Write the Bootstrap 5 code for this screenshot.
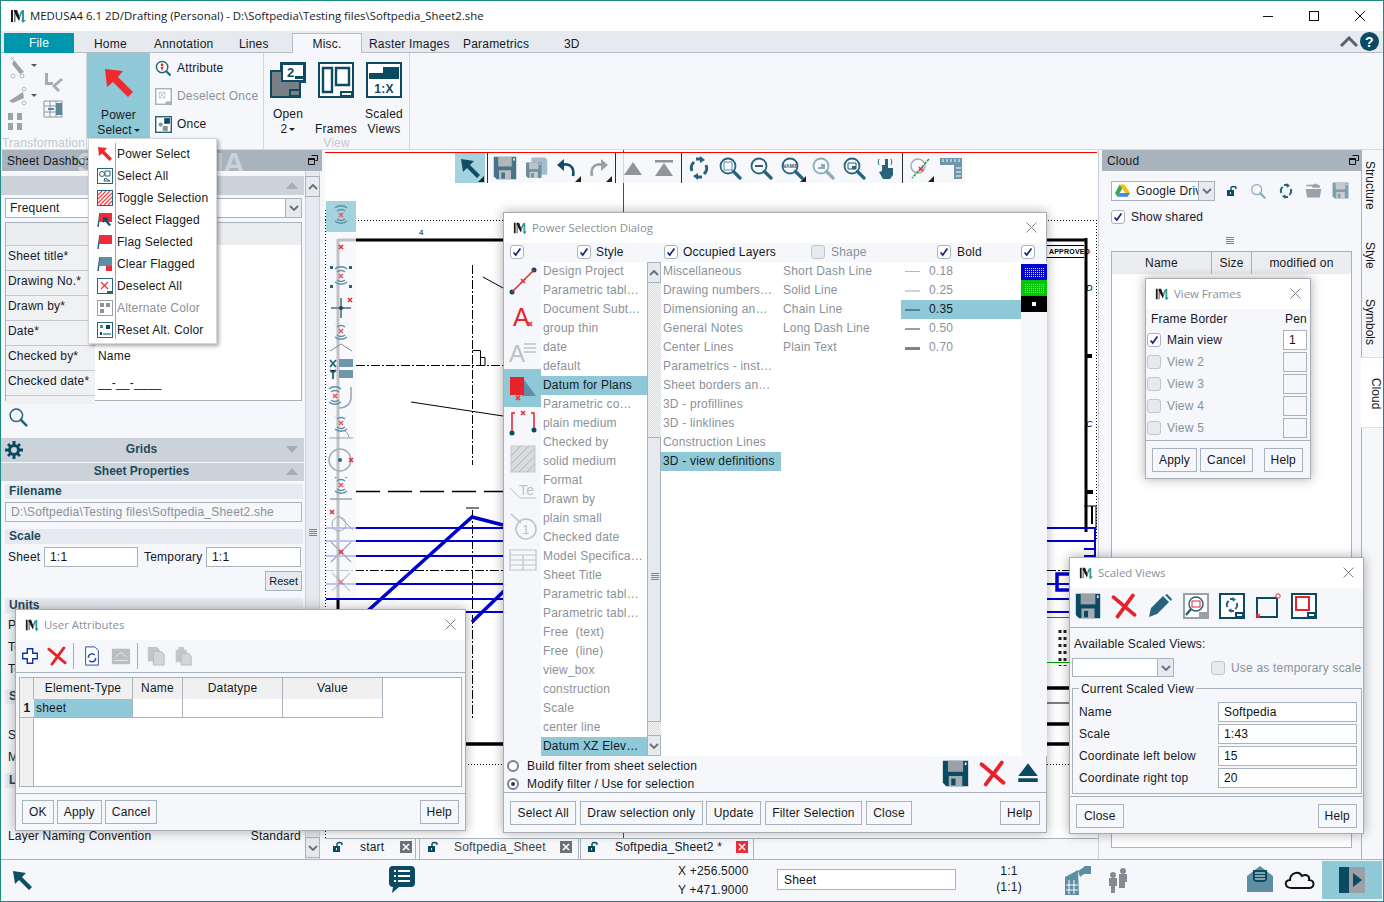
<!DOCTYPE html>
<html lang="en">
<head>
<meta charset="utf-8">
<title>MEDUSA4</title>
<link rel="stylesheet" href="https://cdn.jsdelivr.net/npm/bootstrap@5.3.0/dist/css/bootstrap.min.css">
<style>
:root{--pg:#f5f7fb;--bar:#a9b3be;--sec:#ccd2d9;--sub:#e6e9ee;--line:#a9b3be;--sel:#8fc9d8;--teal:#0b4a63;--grey:#8b9198}
html,body{margin:0;height:100%;background:var(--pg)}
body{font:12px/1.2 "Liberation Sans",Arial,sans-serif;color:#14191e;letter-spacing:.2px;overflow:hidden}
.defs{position:absolute}
.app{width:1384px;height:902px;position:relative;background:var(--pg);border:1px solid #1f8a80;overflow:hidden}
.ui{font-family:"Open Sans","Noto Sans",sans-serif;letter-spacing:0;font-size:11.4px}
.titlebar{height:30px;background:#fff;padding-left:9px;flex:none}
.titlebar .t{margin-left:4px;white-space:nowrap}
.winbtns{margin-left:auto}
.winbtns svg{display:block;width:46px;height:14px}
.rtabs{height:22px;background:var(--sub);border-bottom:1px solid #b6bdc5;flex:none;position:relative}
.rtabs span{position:absolute;top:6px;white-space:nowrap}
.rtabs .file{left:3px;top:2px;width:70px;height:20px;background:#0096ae;color:#fff;text-align:center;line-height:20px}
.rtabs .act{left:291px;top:2px;width:70px;height:21px;background:var(--pg);border:1px solid #b6bdc5;border-bottom:0;text-align:center;line-height:21px}
.t-home{left:93px}.t-ann{left:153px}.t-lin{left:238px}.t-ras{left:368px}.t-par{left:462px}.t-3d{left:563px}
.ic-up{position:absolute;left:1339px;top:5px}.ic-help{position:absolute;left:1359px;top:1px}
.ribbon{height:97px;flex:none;position:relative;background:var(--pg);border-bottom:1px solid #d7dbe0}
.rgrp{position:relative;height:96px;border-right:1px solid #d3d7dc}
.rgrp .cap{position:absolute;bottom:-1px;left:0;right:0;text-align:center;color:#c3c8ce;white-space:nowrap;line-height:14px}
.rgrp .cap.lft{text-align:left;left:1px;right:auto}
.tf{width:86px;flex:none;display:flex}
.tf>div{display:flex;flex-direction:column}
.tf .c1{width:38px;padding:3px 0 0 5px;gap:4px}
.tf .c2{padding:19px 0 0 4px;gap:7px}
.tf svg{display:block;opacity:.75}
.psel{width:63px;height:85px;background:var(--sel);text-align:center;line-height:15px;padding-top:14px;flex:none}
.psel svg{width:32px;height:32px;display:block;margin:0 auto 9px}
.caret{display:inline-block;border:3px solid transparent;border-top:3px solid #222;border-bottom:0;vertical-align:2px;margin-left:2px}
.small3{width:114px;flex:none;padding:1px 0 0 5px;display:flex;flex-direction:column}
.small3 div{height:28px;display:flex;align-items:center;gap:5px}
.small3 svg{width:17px;height:17px;flex:none}
.dis{color:var(--grey)}
.gviews{width:146px;flex:none}
.big{width:48px;text-align:center;line-height:15px;position:absolute;top:9px}
.big svg{width:36px;height:36px;display:block;margin:0 auto 9px}
.b1{left:0}.b2{left:48px}.b3{left:96px}
.main{height:709px;flex:none;position:relative}
.left{width:324px;flex:none}
.phead{height:21px;background:var(--bar);padding-left:5px;line-height:23px;position:relative;white-space:nowrap;overflow:hidden}
.phead.pl{width:320px;margin-left:1px}.phead.pr{width:259px}
.phead svg{position:absolute;right:4px;top:5px;width:10px;height:10px}
.phead.pr svg{right:2px}
.lbody{height:688px}
.lcol{width:303px;flex:none;position:relative}
.secbar{background:var(--sec);text-align:center;position:relative;font-weight:700;color:#1e4a5c;letter-spacing:0;padding-right:22px}
.secbar i{position:absolute;right:6px;top:50%;margin-top:-4px;border:6px solid transparent;border-top:0;border-bottom:7px solid #a5adb6}
.secbar i.dn{border-bottom:0;border-top:7px solid #a5adb6}
.sb1{height:19px;margin-top:5px;line-height:19px;color:#333}
.sb-grid{height:24px;line-height:23px;margin-top:11px}
.sb-prop{height:18px;line-height:17px;margin-top:1px}
.gear{position:absolute;left:4px;top:3px}
.sub{background:var(--sub);font-weight:700;color:#1e4a5c;padding-left:4px;height:15px;line-height:15px;letter-spacing:.1px;margin:7px 1px 0 4px}
.sub.s3{margin-top:3px}.sub.s9{margin-top:9px}.sub.s5{margin-top:5px}
.vsb{width:15px;flex:none;background:var(--sub);border:solid #cfd3d9;border-width:0 1px;position:relative;margin-left:1px}
.vsb .b{height:21px;background:var(--sub);border:1px solid #a9b3be;position:absolute;left:-1px;right:-1px;text-align:center}
.vsb .top{top:5px}.vsb .bot{bottom:1px}
.vsb .chev{margin-top:7px}
.chev{width:10px;height:6px;display:block;margin:0 auto}
.grip{width:8px;height:7px;background:repeating-linear-gradient(#7c858f 0 1px,transparent 1px 2px);position:absolute;left:3px}
.grip.g1{top:358px}
.qinp{height:20px;border:1px solid var(--line);border-radius:0;padding:0 5px;font-size:12px;background:#fff;min-height:0;color:#111;line-height:18px;box-shadow:none;letter-spacing:.2px}
.qinp.ro{color:var(--grey);background:var(--pg)}
.combo{height:20px;border:1px solid var(--line);background:#fff;display:flex;overflow:hidden}
.combo .v{flex:1;padding:0 4px;line-height:18px;white-space:nowrap;overflow:hidden}
.combo .a{width:16px;border-left:1px solid var(--line);background:var(--sub);display:flex;align-items:center;justify-content:center;flex:none}
.qbtn{height:24px;border:1px solid var(--line);border-radius:0;background:var(--pg);font-size:12px;padding:0 6px;color:#14191e;line-height:22px;--bs-btn-font-size:12px;white-space:nowrap;letter-spacing:.2px}
.qbtn.w7{padding:0 6.5px}
.qbtn.w8{padding:0 7px}
.c-freq{margin:3px 0 0 4px;width:297px}
.ftab{width:297px;margin-left:4px;height:179px;border:1px solid var(--line);background:#fff;margin-top:4px}
.ftab .hd{height:22px;background:#ecedf0}
.ftab .r{display:flex;height:25px}
.ftab .l{width:89px;background:#f0f1f3;border-top:1px solid #c4c9cf;padding-left:2px;line-height:20px;flex:none}
.ftab .r.cut{height:9px}
.ftab .rv{padding-left:3px;line-height:22px}
.ftab .rv.low{line-height:26px}
.search{display:block;margin:6px 0 0 7px}
.i-file{margin:3px 0 0 4px;width:297px}
.srow{margin:3px 0 0 7px}
.srow .l1{width:36px}.srow .l2{margin-left:6px;width:62px}
.w94{width:94px}.w95{width:95px}
.resetw{padding-right:2px;margin-top:4px}
.qbtn.rst{height:20px;line-height:18px;padding:0 3px;background:var(--sub);font-size:11px;letter-spacing:0}
.ur{margin:4px 0 0 7px;height:18px}.ur.f{margin-top:5px}.ur.g{margin-top:24px}
.lnc{margin:41px 3px 0 7px}
.canvas{width:773px;flex:none;position:relative;background:#fff;overflow:hidden}
.dw{position:absolute;left:0;top:0;width:772px;height:688px}
.ctool{position:absolute;left:130px;top:3px;height:30px;width:510px;display:flex;background:rgba(245,247,251,.82)}
.ctool .c{width:31px;display:flex;align-items:center;justify-content:center;position:relative;flex:none}
.ctool .c svg{width:24px;height:24px}
.ctool .c.on{background:rgba(143,201,216,.8);width:30px}
.ctool .c.m::after{content:"";position:absolute;right:1px;bottom:1px;border-left:6px solid transparent;border-bottom:6px solid #222}
.ctool .sep{width:1px;background:#2c3136;margin:0 1px 0 2px;flex:none}
.ctool .sep.s1{margin-left:2px}.ctool .sep.s4{margin-left:2px}
.o75{opacity:.75}.o6{opacity:.6}.o5{opacity:.5}
.ltool{position:absolute;left:1px;top:51px;width:30px;background:rgba(245,247,251,.78);display:flex;flex-direction:column}
.ltool div{height:30.5px;display:flex;align-items:center;justify-content:center}
.ltool .on{background:rgba(143,201,216,.8)}
.ltool svg{width:28px;height:28px}
.dtabs{position:absolute;left:-1px;right:0;top:688px;height:21px;background:var(--pg);border-top:1px solid var(--line);display:flex}
.dtab{height:21px;border:1px solid var(--line);border-top:0;margin-right:3px;position:relative;flex:none;line-height:16px}
.dtab svg{position:absolute;top:2px;width:12px;height:12px}
.dtab .lk{left:7px}.dtab .cl{right:6px}.dtab .cl3{right:5px}
.dtab span{position:absolute;left:35px;white-space:nowrap}
.dt1{width:92px}.dt1 .cl{right:3px}.dt2{width:160px}.dt2 span{left:34px}.dt2 span{color:#3a4249}
.dt3{width:174px;margin-left:-2px}.dt3 .lk{left:6px}.dt3 span{left:34px}
.right{width:263px;flex:none;border-left:1px solid #c9ced4;padding-left:3px}
.rrow{margin:10px 0 0 9px;height:19px}
.c-gd{width:104px;flex:none}
.c-gd .v{padding-left:3px;display:flex;align-items:center;gap:6px}
.gd{width:15px;height:14px;flex:none}
.rrow .lk{width:12px;height:12px;margin-left:11px}
.rrow .s{width:16px;height:16px;margin-left:12px}
.rrow .fo{width:17px;height:17px;margin-left:11px}
.rrow .sv{width:17px;height:17px;margin-left:10px}
.shared{margin:10px 0 0 9px;gap:6px}
.grip.g2{position:relative;left:0;margin:13px 0 0 124px;height:8px}
.rtable{width:241px;height:597px;border:1px solid var(--line);background:#fff;margin-left:9px;margin-top:6px}
.rtable .h{display:flex;height:22px;background:#ecedf0;text-align:center;line-height:22px}
.rtable .h div+div{border-left:1px solid var(--line)}
.rtable .n1{width:99px}.rtable .n2{width:40px}.rtable .n3{flex:1}
.vtabs{width:23px;flex:none;border-left:1px solid var(--line);position:relative}
.vt{position:absolute;left:1px;writing-mode:vertical-rl;white-space:nowrap;letter-spacing:0}
.v1{top:11px}.v2{top:92px}.v3{top:149px}
.vt.act{top:207px;left:-1px;width:23px;background:#fff;padding:20px 0 0 2px;height:71px;border:1px solid #dde1e6;border-left:0}
.status{height:43px;flex:none;border-top:1px solid var(--line);background:var(--pg);position:relative}
.status>*{position:absolute}
.st-ar{left:9px;top:8px;width:24px;height:24px}
.st-ch{left:387px;top:5px;width:28px;height:30px}
.st-x{left:677px;top:4px}.st-y{left:677px;top:23px}
.qinp.st-in{left:776px;top:9px;width:179px;height:21px;padding-left:6px}
.st-s1{left:998px;top:4px;width:20px;text-align:center}
.st-s2{left:990px;top:20px;width:36px;text-align:center}
.st-i1{left:1063px;top:5px;width:28px;height:30px}
.st-i2{left:1105px;top:7px;width:24px;height:26px}
.st-i3{left:1245px;top:5px;width:28px;height:28px}
.st-i4{left:1283px;top:8px;width:32px;height:22px}
.st-sel{left:1321px;top:1px;width:60px;height:38px;background:var(--sel);display:flex;align-items:center;justify-content:center}
.form-check-input{width:14px;height:14px;margin:0;border:1px solid #a9b3be;border-radius:0;background-color:#fff;opacity:1!important;flex:none}
.form-check-input:disabled{background-color:#e6e9ee;border-color:#c0c6cd}
.form-check-input:checked,.form-check-input:checked:disabled{background-color:#fff;border-color:#a9b3be;background-image:url("data:image/svg+xml,%3csvg xmlns='http://www.w3.org/2000/svg' viewBox='0 0 14 14'%3e%3cpath fill='none' stroke='%231a237e' stroke-width='2' d='M3 7.5l2.5 3L11 3'/%3e%3c/svg%3e");background-size:100%}
.dlg{position:absolute;background:var(--pg);border:1px solid #a7adb4;box-shadow:0 0 11px rgba(0,0,0,.32);display:flex;flex-direction:column;z-index:5}
.dtitle{height:30px;background:#fff;display:flex;align-items:center;padding-left:9px;color:#8a9097;flex:none;position:relative}
.dtitle .lg{width:14px;height:14px;margin-right:5px}
.dtitle .x{position:absolute;right:9px;top:9px;width:11px;height:11px}
.d-ua{left:14px;top:608px;width:451px;height:222px}
.d-ps{left:502px;top:211px;width:544px;height:621px}
.d-vf{left:1144px;top:277px;width:166px;height:201px}
.d-sv{left:1068px;top:556px;width:295px;height:277px}
.uatool{height:33px;border-bottom:1px solid var(--line);display:flex;align-items:center;padding-left:4px;flex:none}
.uatool svg{width:20px;height:20px;margin-right:7px}
.uatool svg.m9{margin-right:9px}
.uatool svg.m6{margin-right:6px}
.uatool .s{width:1px;height:26px;background:#aab;margin:0 8px 0 0}
.uag{margin:4px 3px 0 3px;height:110px;border:1px solid var(--line);background:#fff;display:grid;grid-template-columns:14px 99px 50px 100px 100px 1fr;grid-template-rows:21px 19px 1fr;flex:none}
.uag>div{border-right:1px solid var(--line);text-align:center;line-height:20px;background:#f0f0f1}
.uag .c{background:#fff;border-bottom:1px solid var(--line);text-align:left}
.uag .n{background:#f0f0f1;font-weight:700;border-bottom:1px solid var(--line);border-right:0;line-height:18px}
.uag .s{background:var(--sel);text-align:left;padding-left:2px;border-bottom:1px solid var(--line);line-height:18px}
.uag .e{background:#fff;border:0}
.ftr{display:flex;gap:3px;border-top:1px solid var(--line);flex:none}
.ftr.f-ua{margin-top:6px;padding:6px 6px 0}
.ftr.f-ps{padding:8px 6px 0;gap:3.5px}
.ftr.f-vf{margin-top:1px;padding:7px 7px 0 6px}
.ftr.f-sv{margin-top:2px;padding:7px 6px 0}
.colhd{height:19px;position:relative;flex:none}
.colhd>*{position:absolute;top:2px}
.ch1{left:6px}.ch2{left:73px}.ch3{left:92px}.ch4{left:160px}.ch5{left:179px}.ch6{left:307px}.ch7{left:327px}.ch8{left:433px}.ch9{left:453px}.ch10{left:517px}
.lists{height:494px;display:flex;flex:none}
.icol{width:37px;flex:none;position:relative;display:flex;flex-direction:column;align-items:center;background:var(--pg)}
.icol svg{flex:none}
.i1{margin-top:4px}.i2{margin-top:6px}.i3{margin-top:6px}.i5{margin-top:1px}.i6{margin-top:8px}.i7{margin-top:9px}.i8{margin-top:8px}.i9{margin-top:7px}
.isel{width:37px;height:38px;background:var(--sel);margin-top:3px;display:flex;align-items:center;justify-content:center;flex:none}
.lg-g{--bs-list-group-bg:transparent;--bs-list-group-border-width:0;border-radius:0;flex:none;background:#fff}
.lg-g .list-group-item{height:19px;padding:0 2px;line-height:19px;color:var(--grey);white-space:pre;overflow:hidden;background:transparent;border:0;border-radius:0}
.lg-g .list-group-item.active{background:var(--sel);color:#14191e}
.w106{width:106px}.w120{width:120px}
.lw{width:15px;height:1px;margin:0 9px 0 2px;background:#b5bac0}
.lw.a{background:#d0d3d6;box-shadow:0 1px #d0d3d6}
.lw.b{height:2px;background:#5a7e90}
.lw.c{height:2px;background:#9a9fa5}
.lw.d{height:2px;background:#7c8187;box-shadow:0 1px #7c8187}
.lsb{margin:0;width:14px;background:repeating-conic-gradient(#d9dce0 0 25%,#f4f5f7 0 50%) 0 0/2px 2px;border:0;border-left:1px solid #a9b3be}
.lsb .b{left:-1px;right:0}
.lsb .top{top:0}.lsb .bot{bottom:0}
.lsb .thumb{top:175px;height:285px}
.grip.g3{top:135px}
.colors{width:26px;flex:none;background:var(--pg);padding-top:2px}
.colors svg{display:block}
.radios{height:36px;flex:none;padding-left:3px}
.radios .fcol{flex:1}
.radios .rr{gap:8px;height:18px}
.radios .r1{margin-top:1px}
.rs1{margin:4px 10px 0 0}.rs2{margin:4px 10px 0 0}.rs3{margin:5px 6px 0 0}
.radio{width:12px;height:12px;border:2px solid #7b838c;border-radius:50%;display:inline-block;position:relative;background:#fff}
.radio.on::after{content:"";position:absolute;left:2px;top:2px;width:4px;height:4px;border-radius:50%;background:#2a3a6e}
.menu{position:absolute;left:87px;top:137px;width:129px;height:206px;background:#fff;border:1px solid #d4d7db;box-shadow:2px 2px 4px rgba(0,0,0,.35);z-index:6;padding-top:4px}
.menu::before{content:"";position:absolute;left:26px;top:4px;bottom:4px;width:1px;background:#9ea5ad}
.menu div{height:22px;display:flex;align-items:center;white-space:nowrap}
.menu svg{width:16px;height:16px;margin:0 4px 0 8px;flex:none}
.wm{position:absolute;left:76px;top:147px;font:700 30px/1 "Liberation Sans",sans-serif;color:rgba(255,255,255,.42);letter-spacing:-.5px;z-index:4;pointer-events:none}
.vf-h{padding:3px 3px 3px 5px}
.vf-r{height:22px;padding:0 3px 0 1px;gap:6px}
.w24{width:24px}
.sv-tb{height:40px;gap:10px;padding:0 0 4px 5px;border-bottom:1px solid var(--line);flex:none}
.sv-av{padding:9px 0 0 4px}
.sv-c{margin-top:7px;padding-left:2px}
.c-sv{width:102px;height:19px}
.sv-cb{margin-left:37px}
.sv-u{margin-left:6px;white-space:nowrap}
.sv-f{border:1px solid var(--line);margin:11px 1px 0 2px;height:106px;padding:12px 4px 0 6px}
.sv-f legend{font-size:12px;top:-7px;left:6px;width:auto;background:var(--pg);padding:0 2px;margin:0;letter-spacing:.2px}
.sv-r{height:22px}
.w139{width:139px}
</style>
</head>
<body>
<svg class="defs" width="0" height="0">
<defs>
<pattern id="dbl" width="2" height="2" patternUnits="userSpaceOnUse"><rect width="2" height="2" fill="#0000d0"/><rect width="1" height="1" fill="#ddd"/></pattern>
<pattern id="dgr" width="2" height="2" patternUnits="userSpaceOnUse"><rect width="2" height="2" fill="#06c506"/><rect width="1" height="1" fill="#bbb"/></pattern>
<symbol id="logo" viewBox="0 0 16 16"><path fill="#1b1b1b" d="M1 2h2v12H1zM4 2h3l3 8-1 3-5-9z"/><path fill="#777" d="M4 4v10h1.500V7z"/><path fill="#2f9a92" d="M11 3l2-1h1v10h2l-3 3-2-3h1V5l-2 5-1-2z"/></symbol>
<symbol id="x" viewBox="0 0 11 11"><path stroke="#7d848b" stroke-width="1" d="M.5.5l10 10M10.500.5l-10 10"/></symbol>
<symbol id="chev" viewBox="0 0 10 6"><path fill="none" stroke="#66707a" stroke-width="1.800" d="M1 1l4 4 4-4"/></symbol>
<symbol id="chevu" viewBox="0 0 10 6"><path fill="none" stroke="#66707a" stroke-width="1.800" d="M1 5l4-4 4 4"/></symbol>
<symbol id="rarrow" viewBox="0 0 32 32"><path fill="#f0292e" d="M2 2l18 2-5 6 15 15-5 5L10 15l-6 5z"/></symbol>
<symbol id="darrow" viewBox="0 0 24 24"><path fill="#0f4d66" d="M3 3l13 2-4 4 10 10-3 3L9 12l-4 4z"/></symbol>
<symbol id="save" viewBox="0 0 32 32"><path fill="#0b4a63" d="M1 1h30v30H5l-4-4z"/><path fill="#9aa0a6" d="M7 1h18v13H7z"/><path fill="#fff" d="M27 3h2v3h-2z"/><path fill="#a6abb1" d="M8 19h16v12H8z"/><path fill="#0b4a63" d="M11 22h5v8h-5z"/></symbol>
<symbol id="redx" viewBox="0 0 32 32"><path fill="none" stroke="#e8222a" stroke-width="4.500" stroke-linecap="round" d="M3 5l26 22M27 3L8 29"/></symbol>
<symbol id="eject" viewBox="0 0 32 32"><path fill="#0b4a63" d="M16 3l13 17H3zM3 23h26v5H3z"/></symbol>
<symbol id="ant" viewBox="0 0 28 28"><path fill="none" stroke="#5f8ea3" stroke-width="1.300" d="M8 6c3-3 9-3 12 0M10 9c2-2 6-2 8 0M8 19c3 3 9 3 12 0M10 17c2 2 6 2 8 0"/><path stroke="#f05a5a" stroke-width="1.600" d="M12 11l4 4M16 11l-4 4"/></symbol>
<symbol id="mkx" viewBox="0 0 6 6"><path stroke="#e8303a" stroke-width="1.600" d="M1 1l4 4M5 1L1 5"/></symbol>
<symbol id="mag" viewBox="0 0 24 24"><circle cx="10" cy="10" r="7.500" fill="none" stroke="#27637b" stroke-width="1.800"/><path stroke="#27637b" stroke-width="3.200" stroke-linecap="round" d="M15.500 15.500L22 22"/></symbol>
<symbol id="lock" viewBox="0 0 12 12"><path fill="#0b4a63" d="M1 5h7v6H1z"/><path fill="none" stroke="#0b4a63" stroke-width="1.400" d="M5 5V3c0-2 5-2 5 0v1"/><path fill="#fff" d="M4 7h1v2H4z"/></symbol>
<symbol id="refresh" viewBox="0 0 24 24"><path fill="none" stroke="#27637b" stroke-width="3" d="M5 15a8 8 0 0 1 2-9M19 9a8 8 0 0 1-2 9M9 3h6M9 21h6"/><path fill="#27637b" d="M13 0l5 4-5 3zM11 24l-5-4 5-3z"/></symbol>
<symbol id="tbx" viewBox="0 0 12 12"><rect width="12" height="12" fill="#6c7278"/><path stroke="#fff" stroke-width="1.600" d="M3 3l6 6M9 3l-6 6"/></symbol>
<symbol id="tbxr" viewBox="0 0 12 12"><rect width="12" height="12" fill="#ee2d38"/><path stroke="#fff" stroke-width="1.600" d="M3 3l6 6M9 3l-6 6"/></symbol>
<symbol id="frame" viewBox="0 0 36 36"><rect x="1" y="1" width="34" height="34" fill="#fff" stroke="#0b4a63" stroke-width="2"/><path fill="#0b4a63" d="M22 29h12v6H22z"/><path fill="#f5f7fb" d="M24 31h9v2h-9z"/></symbol>
</defs>
</svg>

<div class="app d-flex flex-column">
  <header class="titlebar d-flex align-items-center">
    <svg width="16" height="16"><use href="#logo"/></svg>
    <span class="t ui">MEDUSA4 6.1 2D/Drafting (Personal) - D:\Softpedia\Testing files\Softpedia_Sheet2.she</span>
    <div class="winbtns d-flex">
      <svg viewBox="0 0 46 14"><path stroke="#111" d="M18 7.500h10"/></svg>
      <svg viewBox="0 0 46 14"><rect x="18.500" y="2.500" width="9" height="9" fill="none" stroke="#111"/></svg>
      <svg viewBox="0 0 46 14"><path stroke="#111" d="M18 2l10 10M28 2L18 12"/></svg>
    </div>
  </header>

  <nav class="rtabs">
    <span class="file">File</span>
    <span class="t-home">Home</span>
    <span class="t-ann">Annotation</span>
    <span class="t-lin">Lines</span>
    <span class="act">Misc.</span>
    <span class="t-ras">Raster Images</span>
    <span class="t-par">Parametrics</span>
    <span class="t-3d">3D</span>
    <svg class="ic-up" width="18" height="11" viewBox="0 0 18 11"><path fill="none" stroke="#59616a" stroke-width="3" d="M1 10l8-8 8 8"/></svg>
    <svg class="ic-help" width="19" height="19" viewBox="0 0 19 19"><circle cx="9.500" cy="9.500" r="9.500" fill="#0b4a63"/><text x="9.500" y="14.500" text-anchor="middle" font-family="Liberation Sans" font-weight="700" font-size="14" fill="#fff">?</text></svg>
  </nav>

  <div class="ribbon d-flex">
    <div class="rgrp tf">
      <div class="c1">
        <svg width="32" height="24" viewBox="0 0 32 24"><path fill="#7e8790" d="M8 4l10 12-4 2L6 8z"/><path fill="none" stroke="#9aa" d="M5 1l3 3M8 1L5 4"/><circle cx="7" cy="20" r="2" fill="none" stroke="#9aa"/><circle cx="16" cy="20" r="2" fill="none" stroke="#9aa"/><path fill="#222" d="M25 8h6l-3 3z"/></svg>
        <svg width="32" height="24" viewBox="0 0 32 24"><path fill="#7e8790" d="M3 17l14-9 1 6-11 5z"/><circle cx="18" cy="5" r="2" fill="none" stroke="#9aa"/><circle cx="18" cy="19" r="2" fill="none" stroke="#9aa"/><path fill="#222" d="M25 10h6l-3 3z"/></svg>
        <svg width="22" height="20" viewBox="0 0 22 20"><path fill="#7e8790" d="M2 1h5v7H2zM11 1h5v7h-5zM2 11h5v7H2zM11 11h5v7h-5z"/></svg>
      </div>
      <div class="c2">
        <svg width="22" height="20" viewBox="0 0 22 20"><path fill="#8b939b" d="M2 1h3v9h5v3H2zM9 14l9-8 2 2-7 6 4 4-2 2z"/></svg>
        <svg width="22" height="20" viewBox="0 0 22 20"><path fill="none" stroke="#6d7780" d="M1 2h18v16H1zM1 7h18M1 13h18M7 2v16M13 2v16"/><path fill="#27637b" d="M13 4h6v12h-6zM5 9h6v2H5z"/></svg>
      </div>
      <div class="cap lft">Transformation</div>
    </div>
    <div class="psel">
      <svg><use href="#rarrow"/></svg>
      Power<br>Select<i class="caret"></i>
    </div>
    <div class="rgrp small3">
      <div><svg viewBox="0 0 24 24"><circle cx="10" cy="10" r="8" fill="#fff" stroke="#27637b" stroke-width="2"/><circle cx="10" cy="7" r="2" fill="#e8222a"/><path fill="#e8222a" d="M8 10h4l-2 6z"/><path stroke="#27637b" stroke-width="3" d="M16 16l6 6"/></svg>Attribute</div>
      <div class="dis"><svg viewBox="0 0 24 24"><rect x="1" y="1" width="22" height="22" fill="#fff" stroke="#a9afb6" stroke-width="2"/><path fill="none" stroke="#b0b5bb" d="M6 6h8v8H6zM6 6l8 8M14 6l-8 8"/><path fill="#a9afb6" d="M15 19h8v4h-8z"/></svg>Deselect Once</div>
      <div><svg viewBox="0 0 24 24"><rect x="1" y="1" width="22" height="22" fill="#fff" stroke="#27637b" stroke-width="2"/><path fill="#0b4a63" d="M13 3h8v8h-8z"/><circle cx="8" cy="12" r="3" fill="#8a9198"/><path fill="#8a9198" d="M11 14h7v7h-7z"/></svg>Once</div>
    </div>
    <div class="rgrp gviews">
      <div class="big b1"><svg viewBox="0 0 36 36"><path fill="#7a7f85" stroke="#0b4a63" stroke-width="2" d="M1 9h10V1h24v19h-5v15H1z"/><path fill="#fff" stroke="#0b4a63" stroke-width="2" d="M12 2h22v17H12z"/><text x="17" y="15" font-family="Liberation Sans" font-weight="700" font-size="13" fill="#0b4a63">2</text><path fill="#0b4a63" d="M25 14h8v3h-8zM19 27h12v8H19z"/><path fill="#7a7f85" d="M21 29h8v4h-8z"/></svg>Open<br>2<i class="caret"></i></div>
      <div class="big b2"><svg viewBox="0 0 36 36"><use href="#frame"/><path fill="none" stroke="#0b4a63" stroke-width="2.400" d="M5 6h9v24H5zM18 6h13v17H18z"/></svg><br>Frames</div>
      <div class="big b3"><svg viewBox="0 0 36 36"><rect x="1" y="1" width="34" height="34" fill="#fff" stroke="#0b4a63" stroke-width="2"/><path fill="#0b4a63" d="M3 17V11h14V5h16v12z"/><text x="18" y="31" text-anchor="middle" font-family="Liberation Sans" font-weight="700" font-size="12" fill="#0b4a63">1:X</text></svg>Scaled<br>Views</div>
      <div class="cap">View</div>
    </div>
  </div>

  <div class="main d-flex">
    <aside class="left">
      <div class="phead pl">Sheet Dashboard
        <svg viewBox="0 0 10 10"><path fill="none" stroke="#111" d="M3.500.5h6v5h-2M.5 3.500h6v6h-6z"/><path stroke="#111" stroke-width="2" d="M.5 4h6"/></svg>
      </div>
      <div class="d-flex lbody">
        <div class="lcol">
          <div class="secbar sb1"><i></i>Sheet</div>
          <div class="combo c-freq"><div class="v">Frequent</div><div class="a"><svg class="chev"><use href="#chev"/></svg></div></div>
          <div class="ftab">
            <div class="hd"></div>
            <div class="r"><div class="l">Sheet title*</div></div>
            <div class="r"><div class="l">Drawing No.*</div></div>
            <div class="r"><div class="l">Drawn by*</div></div>
            <div class="r"><div class="l">Date*</div></div>
            <div class="r"><div class="l">Checked by*</div><div class="rv">Name</div></div>
            <div class="r"><div class="l">Checked date*</div><div class="rv low">__-__-____</div></div>
            <div class="r cut"><div class="l"></div></div>
          </div>
          <svg class="search" width="20" height="20"><use href="#mag"/></svg>
          <div class="secbar sb-grid">
            <svg class="gear" width="18" height="18" viewBox="0 0 18 18"><g fill="#0b4a63"><circle cx="9" cy="9" r="6"/><path d="M7.500 0h3v18h-3zM0 7.500h18v3H0z"/><path d="M2 4l2-2 12 12-2 2zM14 2l2 2L4 16l-2-2z"/></g><circle cx="9" cy="9" r="3" fill="#ccd2d9"/></svg>
            <i class="dn"></i>Grids</div>
          <div class="secbar sb-prop"><i></i>Sheet Properties</div>
          <div class="sub s3">Filename</div>
          <input class="form-control qinp ro i-file" value="D:\Softpedia\Testing files\Softpedia_Sheet2.she" readonly>
          <div class="sub">Scale</div>
          <div class="d-flex align-items-center srow">
            <span class="l1">Sheet</span><input class="form-control qinp w94" value="1:1"><span class="l2">Temporary</span><input class="form-control qinp w95" value="1:1">
          </div>
          <div class="text-end resetw"><button class="btn qbtn rst">Reset</button></div>
          <div class="sub">Units</div>
          <div class="ur f">Paper</div>
          <div class="ur">Text</div>
          <div class="ur">Text</div>
          <div class="sub s9">Styles</div>
          <div class="ur g">Style</div>
          <div class="ur">Mode</div>
          <div class="sub s5">Layers</div>
          <div class="d-flex justify-content-between lnc"><span>Layer Naming Convention</span><span>Standard</span></div>
        </div>
        <div class="vsb">
          <div class="b top"><svg class="chev"><use href="#chevu"/></svg></div>
          <div class="grip g1"></div>
          <div class="b bot"><svg class="chev"><use href="#chev"/></svg></div>
        </div>
      </div>
    </aside>

    <section class="canvas">
      <svg class="dw" viewBox="325 150 772 688" fill="none">
        <path stroke="#f00" d="M325 152.500h772M623.500 150v690"/>
        <g stroke="#000">
          <path stroke-dasharray="1 2" d="M325 220.500h772M325.500 210v628M1096.500 220v320"/>
          <path stroke-width="3" d="M338 240h749M1086 238v294"/>
          <path stroke-width="3" d="M338 239v370"/>
          <path stroke-width="4" d="M1085 356h7M1085 492h8"/>
          <path stroke-dasharray="9 2 2 2" d="M472.500 265v200M356 365.500h147M325 570.500h178M472.500 510v208M1047 570.500h40"/>
          <path d="M483 277l20 11M411 402l92 14M472.500 350.500h8v15M480 357.500h5v8M466 508h13"/>
          <path stroke-dasharray="24 8" stroke-width="1.500" d="M356 491.500h147"/>
          <path stroke-width="3.500" d="M465 744h38M1047 688h24M1047 724h24M1047 744h24"/>
          <path d="M1047 703h24M1047 245.500h37M1047 257.500h37M1084 506h12v24"/>
          <path stroke-dasharray="1 2" d="M465 764.500h38M1047 764.500h24"/>
          <path stroke-width="2" d="M1092 506v18"/>
        </g>
        <text x="419" y="235" font-size="8" font-family="Liberation Sans" fill="#000">4</text>
        <text x="1086" y="291" font-size="9" font-family="Liberation Sans" font-style="italic" fill="#000">D</text>
        <text x="1086" y="427" font-size="9" font-family="Liberation Sans" font-style="italic" fill="#000">C</text>
        <text x="1049" y="254" font-size="7" font-weight="700" font-family="Liberation Sans" fill="#000">APPROVED</text>
        <g stroke="#0000cc" stroke-width="2">
          <path d="M326 528h177M326 541h177M326 556h177M326 584h177M326 599h177M326 612h177M1047 528h40M1047 541h40M1047 584h23M1047 599h23M1047 612h23M1084 528h11v28h-11M1084 541h11M1084 549h11"/>
          <path stroke-width="3.500" d="M362 616l110-99 31 8M472 622l33-32M1070 574h-13v16h13"/>
        </g>
        <path stroke="#00a000" d="M1047 617.500h24M1047 662.500h24"/>
        <path stroke="#222" stroke-dasharray="3 4" stroke-width="3" d="M1060 630v36M1065 630v36"/>
      </svg>
      <div class="ltool">
        <div class="on"><svg><use href="#ant"/></svg></div>
        <div><svg viewBox="0 0 28 28"><use href="#mkx" x="11" y="11" width="6" height="6"/></svg></div>
        <div><svg viewBox="0 0 28 28"><use href="#ant"/><path fill="#27637b" d="M3 3h3v3H3zM22 3h3v3h-3zM3 22h3v3H3zM22 22h3v3h-3z"/></svg></div>
        <div><svg viewBox="0 0 28 28"><path stroke="#7f8a94" stroke-width="2" d="M4 14h20M14 4v20"/><circle cx="14" cy="14" r="2" fill="#0b4a63"/><use href="#mkx" x="20" y="3" width="6" height="6"/></svg></div>
        <div><svg viewBox="0 0 28 28"><use href="#ant" y="-6"/><path fill="none" stroke="#7f8a94" d="M3 27l11-7 11 7"/></svg></div>
        <div><svg viewBox="0 0 28 28"><path fill="#6f97ab" d="M12 4h14v8H12zM12 15h14v8H12z"/><path stroke="#27637b" stroke-width="1.800" d="M3 5l6 7M9 5l-6 7M6 18v6M3 15l3 3 3-3"/></svg></div>
        <div><svg viewBox="0 0 28 28"><use href="#ant" x="-6" y="-2"/><path fill="none" stroke="#9aa3ab" stroke-width="1.500" d="M24 2v10c0 7-5 11-12 11"/></svg></div>
        <div><svg viewBox="0 0 28 28"><use href="#ant" y="-6"/><path stroke="#9aa3ab" d="M2 22h24"/><path fill="none" stroke="#9aa3ab" d="M14 14a8 8 0 0 1 8 8"/></svg></div>
        <div><svg viewBox="0 0 28 28"><circle cx="13" cy="14" r="11" stroke="#a5acb3" stroke-width="1.500" fill="none"/><circle cx="13" cy="14" r="2" fill="#27637b"/><use href="#mkx" x="21" y="11" width="6" height="6"/></svg></div>
        <div><svg viewBox="0 0 28 28"><use href="#ant" y="-5"/><path stroke="#9aa3ab" stroke-width="1.500" d="M3 22h22"/></svg></div>
        <div><svg viewBox="0 0 28 28"><circle cx="12" cy="17" r="7" stroke="#a5acb3" fill="none"/><path stroke="#9aa3ab" d="M12 9l14 14"/><use href="#mkx" x="2" y="2" width="6" height="6"/></svg></div>
        <div><svg viewBox="0 0 28 28"><path stroke="#a5acb3" stroke-width="1.400" d="M4 4l20 20M24 4L4 24"/><use href="#mkx" x="11" y="11" width="6" height="6"/></svg></div>
        <div><svg class="o6" viewBox="0 0 28 28"><path stroke="#a5acb3" stroke-width="1.200" d="M5 5l18 18M23 5L5 23"/><use href="#mkx" x="11" y="11" width="6" height="6"/></svg></div>
      </div>
      <div class="ctool">
        <div class="c on m"><svg><use href="#darrow"/></svg></div>
        <span class="sep s1"></span>
        <div class="c"><svg class="o75" viewBox="0 0 32 32"><use href="#save"/></svg></div>
        <div class="c"><svg class="o6" viewBox="0 0 32 32"><path fill="#6f97ab" d="M10 2h18l3 3v20H10z"/><use href="#save" x="2" y="8" width="22" height="22"/></svg></div>
        <div class="c m"><svg viewBox="0 0 24 24"><path fill="none" stroke="#0f4d66" stroke-width="2.600" d="M5 10c8-4 15 0 13 10"/><path fill="#0f4d66" d="M9 3v12L2 9z"/></svg></div>
        <div class="c m"><svg viewBox="0 0 24 24"><path fill="none" stroke="#9aa0a6" stroke-width="2.600" d="M19 10c-8-4-15 0-13 10"/><path fill="#9aa0a6" d="M15 3v12l7-6z"/></svg></div>
        <span class="sep s4"></span>
        <div class="c"><svg viewBox="0 0 24 24"><path fill="#8f959b" d="M12 6l9 13H3z"/></svg></div>
        <div class="c"><svg viewBox="0 0 24 24"><path fill="#8f959b" d="M3 4h18v2.500H3zM12 7l9 13H3z"/></svg></div>
        <span class="sep"></span>
        <div class="c"><svg><use href="#refresh"/></svg></div>
        <div class="c"><svg><use href="#mag"/><rect x="6" y="6" width="8" height="8" fill="none" stroke="#5f8ea3"/></svg></div>
        <div class="c"><svg><use href="#mag"/><path stroke="#27637b" stroke-width="2" d="M6 10h8"/></svg></div>
        <div class="c m"><svg><use href="#mag"/><text x="10" y="12" text-anchor="middle" font-size="5" font-weight="700" font-family="Liberation Sans" fill="#27637b">NAME</text></svg></div>
        <div class="c"><svg class="o5"><use href="#mag"/><path fill="#27637b" d="M7 11h3V8h4v5H7z"/></svg></div>
        <div class="c"><svg><use href="#mag"/><path fill="none" stroke="#27637b" d="M6 7h8v6H6z"/><path fill="#27637b" d="M10 10h4v3h-4z"/></svg></div>
        <div class="c"><svg viewBox="0 0 24 24"><path fill="#27637b" d="M9 9h3v-6h3v9h5v7l-3 4h-7l-4-7 3-1z"/><path fill="none" stroke="#27637b" d="M6 3c-1 2-1 4 0 6M18 3c1 2 1 4 0 6"/></svg></div>
        <span class="sep"></span>
        <div class="c m"><svg viewBox="0 0 24 24"><circle cx="10" cy="10" r="7" stroke="#a5acb3" stroke-width="1.500" fill="none"/><path stroke="#2d9b4a" stroke-width="1.500" stroke-dasharray="3 1" d="M21 3L4 22"/><use href="#mkx" x="10" y="10" width="6" height="6"/></svg></div>
        <div class="c"><svg viewBox="0 0 24 24"><path fill="#6f97ab" d="M1 2h22v21h-8V9H1z"/><path stroke="#fff" d="M4 3v3M8 3v3M12 3v3M16 3v3M20 3v3M17 12h5M17 16h5M17 20h5"/></svg></div>
      </div>
      <div class="dtabs">
        <div class="dtab dt1"><svg class="lk"><use href="#lock"/></svg><span>start</span><svg class="cl"><use href="#tbx"/></svg></div>
        <div class="dtab dt2"><svg class="lk"><use href="#lock"/></svg><span>Softpedia_Sheet</span><svg class="cl"><use href="#tbx"/></svg></div>
        <div class="dtab dt3"><svg class="lk"><use href="#lock"/></svg><span>Softpedia_Sheet2 *</span><svg class="cl3"><use href="#tbxr"/></svg></div>
      </div>
    </section>

    <aside class="right">
      <div class="phead pr">Cloud
        <svg viewBox="0 0 10 10"><path fill="none" stroke="#111" d="M3.500.5h6v5h-2M.5 3.500h6v6h-6z"/><path stroke="#111" stroke-width="2" d="M.5 4h6"/></svg>
      </div>
      <div class="d-flex align-items-center rrow">
        <div class="combo c-gd"><div class="v"><svg class="gd" viewBox="0 0 16 14"><path fill="#34a853" d="M5 0L0 9l2.500 4L8 4z"/><path fill="#fbbc04" d="M5 0h5l6 9h-5z"/><path fill="#4285f4" d="M2.500 13h11L16 9H5z"/></svg><span>Google Drive</span></div><div class="a"><svg class="chev"><use href="#chev"/></svg></div></div>
        <svg class="lk" viewBox="0 0 12 12"><use href="#lock"/></svg>
        <svg class="s o5" viewBox="0 0 24 24"><use href="#mag"/></svg>
        <svg class="s" viewBox="0 0 24 24"><use href="#refresh"/></svg>
        <svg class="fo o6" viewBox="0 0 24 24"><path fill="#5b6b76" d="M2 6h7l2 2h10v-3l-7-3-3 2H2zM1 10h22l-2 12H3z"/></svg>
        <svg class="sv o5" viewBox="0 0 32 32"><use href="#save"/></svg>
      </div>
      <div class="d-flex align-items-center shared"><input class="form-check-input" type="checkbox" checked disabled><span>Show shared</span></div>
      <div class="grip g2"></div>
      <div class="rtable">
        <div class="h"><div class="n1">Name</div><div class="n2">Size</div><div class="n3">modified on</div></div>
      </div>
    </aside>

    <div class="vtabs">
      <span class="vt v1">Structure</span>
      <span class="vt v2">Style</span>
      <span class="vt v3">Symbols</span>
      <span class="vt act">Cloud</span>
    </div>
  </div>

  <footer class="status">
    <svg class="st-ar"><use href="#darrow"/></svg>
    <svg class="st-ch" viewBox="0 0 28 30"><path fill="#0b4a63" d="M5 1h18c3 0 4 2 4 4v13c0 2-1 4-4 4H11l-7 6 1-6c-3 0-4-2-4-4V5c0-2 1-4 4-4z"/><path stroke="#fff" stroke-width="1.800" d="M6 6h2M10 6h12M6 11h2M10 11h12M6 16h2M10 16h12"/></svg>
    <span class="st-x">X +256.5000</span>
    <span class="st-y">Y +471.9000</span>
    <input class="form-control qinp st-in" value="Sheet">
    <span class="st-s1">1:1</span>
    <span class="st-s2">(1:1)</span>
    <svg class="st-i1" viewBox="0 0 28 30"><path fill="#5f8ea3" d="M1 12L14 5l1 25H1z"/><path stroke="#fff" d="M5 15v14M10 15v14M2 20h12M2 25h12"/><path fill="#5f8ea3" d="M14 6l6-4v-1h7v8h-7l-4 3z"/></svg>
    <svg class="st-i2" viewBox="0 0 24 26"><g fill="#858b91"><circle cx="7" cy="8" r="3"/><path d="M3 11h8v8H9v7H5v-7H3z"/><circle cx="17" cy="4" r="3"/><path d="M13 7h8v8h-2v6h-6z"/></g></svg>
    <svg class="st-i3" viewBox="0 0 28 28"><path fill="#5f8ea3" d="M1 11L14 1l13 10v16H1z"/><path fill="#0b4a63" d="M7 5h14v12H7z"/><path stroke="#fff" d="M9 8h10M9 11h10M9 14h10"/><path fill="#5f8ea3" d="M1 11l13 9 13-9v16H1z"/></svg>
    <svg class="st-i4" viewBox="0 0 32 22"><path fill="none" stroke="#111" stroke-width="2" d="M8 20c-8 0-8-8-2-8 0-7 9-10 12-4 5-3 8 1 7 4 6 0 6 8 0 8z"/></svg>
    <div class="st-sel"><svg width="26" height="26" viewBox="0 0 26 26"><path fill="#0b4a63" d="M0 0h10v26H0z"/><path fill="#9aa0a6" d="M10 0h16v26H10z"/><path fill="#0b4a63" d="M14 6l9 7-9 7z"/></svg></div>
  </footer>

  <div class="wm">SOFTPEDIA</div>

  <div class="menu">
    <div><svg viewBox="0 0 32 32"><use href="#rarrow"/></svg>Power Select</div>
    <div><svg viewBox="0 0 16 16"><rect x=".5" y=".5" width="15" height="15" fill="#fff" stroke="#27637b"/><circle cx="5" cy="6" r="2.500" fill="none" stroke="#27637b"/><path fill="none" stroke="#27637b" d="M8 3h5v5H8zM8 10l5 3H7z"/></svg>Select All</div>
    <div><svg viewBox="0 0 16 16"><rect x=".5" y=".5" width="15" height="15" fill="#fff" stroke="#27637b"/><path stroke="#ee4444" stroke-width="1.200" d="M1 5l4-4M1 9l8-8M1 13L13 1M3 15L15 3M7 15l8-8M11 15l4-4"/></svg>Toggle Selection</div>
    <div><svg viewBox="0 0 16 16"><path stroke="#27637b" stroke-width="1.500" d="M3 1L1 15"/><path fill="#ee2d38" d="M3 1h12v9H2z"/><path fill="#0f4d66" d="M6 5l6 1-2 2 4 5-2 1-4-5-2 2z"/></svg>Select Flagged</div>
    <div><svg viewBox="0 0 16 16"><path stroke="#27637b" stroke-width="1.500" d="M3 1L1 15"/><path fill="#ee2d38" d="M3 1h12v9H2z"/></svg>Flag Selected</div>
    <div><svg viewBox="0 0 16 16"><path stroke="#27637b" stroke-width="1.500" d="M3 1L1 15"/><path fill="#5f8ea3" d="M3 1h12v9H2z"/><path fill="#ee2d38" d="M9 10h6v5H9z"/></svg>Clear Flagged</div>
    <div><svg viewBox="0 0 16 16"><rect x=".5" y=".5" width="15" height="15" fill="#fff" stroke="#27637b"/><path stroke="#ee2d38" stroke-width="1.200" d="M4 4l7 7M11 4l-7 7"/><path fill="#27637b" d="M10 13h6v3h-6z"/></svg>Deselect All</div>
    <div class="dis"><svg viewBox="0 0 16 16"><rect x=".5" y=".5" width="15" height="15" fill="#fff" stroke="#9aa0a6"/><path fill="#8a9198" d="M3 3h4v4H3zM9 3h4v4H9zM3 9h4v4H3z"/></svg>Alternate Color</div>
    <div><svg viewBox="0 0 16 16"><rect x=".5" y=".5" width="15" height="15" fill="#fff" stroke="#27637b"/><path fill="#0b4a63" d="M9 3h4v4H9zM3 10h2v3H3z"/><path fill="#27a35a" d="M3 3h3v3H3z"/><path stroke="#0b4a63" d="M6 12h8"/></svg>Reset Alt. Color</div>
  </div>

  <section class="dlg d-ua">
    <div class="dtitle ui"><svg class="lg"><use href="#logo"/></svg>User Attributes<svg class="x"><use href="#x"/></svg></div>
    <div class="uatool">
      <svg viewBox="0 0 22 22"><path fill="#fff" stroke="#0f2fa8" stroke-width="1.500" d="M8 3h6v5h5v6h-5v5H8v-5H3V8h5z"/></svg>
      <svg class="m6" viewBox="0 0 32 32"><use href="#redx"/></svg>
      <span class="s"></span>
      <svg class="m9" viewBox="0 0 22 22"><path fill="#fff" stroke="#20408f" d="M4 1h10l4 4v16H4z"/><path fill="none" stroke="#2544ad" stroke-width="1.500" d="M7 13a4 4 0 0 1 7-3M15 13a4 4 0 0 1-7 3"/></svg>
      <svg class="m6" viewBox="0 0 22 22"><rect x="1" y="3" width="20" height="17" fill="#b9bec3"/><path fill="none" stroke="#e8eaec" d="M5 12l6-5 6 5M3 16h16"/></svg>
      <span class="s"></span>
      <svg viewBox="0 0 22 22"><path fill="#c2c6cb" d="M2 1h10l3 3v13H2z"/><path fill="#d3d6d9" stroke="#b5bac0" d="M8 6h9l3 3v12H8z"/></svg>
      <svg viewBox="0 0 22 22"><path fill="#c2c6cb" d="M3 4h3V1h6v3h3v14H3z"/><path fill="#d3d6d9" stroke="#b5bac0" d="M9 8h8l3 3v10H9z"/></svg>
    </div>
    <div class="uag">
      <div></div><div>Element-Type</div><div>Name</div><div>Datatype</div><div>Value</div><div class="e"></div>
      <div class="n">1</div><div class="s">sheet</div><div class="c"></div><div class="c"></div><div class="c"></div><div class="e"></div>
      <div></div><div class="e"></div><div class="e"></div><div class="e"></div><div class="e"></div><div class="e"></div>
    </div>
    <div class="ftr f-ua">
      <button class="btn qbtn">OK</button><button class="btn qbtn">Apply</button><button class="btn qbtn">Cancel</button><button class="btn qbtn ms-auto">Help</button>
    </div>
  </section>

  <section class="dlg d-ps">
    <div class="dtitle ui"><svg class="lg"><use href="#logo"/></svg>Power Selection Dialog<svg class="x"><use href="#x"/></svg></div>
    <div class="colhd">
      <input class="form-check-input ch1" type="checkbox" checked disabled>
      <input class="form-check-input ch2" type="checkbox" checked disabled><span class="ch3">Style</span>
      <input class="form-check-input ch4" type="checkbox" checked disabled><span class="ch5">Occupied Layers</span>
      <input class="form-check-input ch6" type="checkbox" disabled><span class="dis ch7">Shape</span>
      <input class="form-check-input ch8" type="checkbox" checked disabled><span class="ch9">Bold</span>
      <input class="form-check-input ch10" type="checkbox" checked disabled>
    </div>
    <div class="lists">
      <div class="icol">
        <svg class="i1" width="28" height="30" viewBox="0 0 28 30"><circle cx="3" cy="26" r="2.500" fill="#0b4a63"/><circle cx="25" cy="4" r="2.500" fill="#0b4a63"/><path stroke="#e8222a" stroke-width="1.500" d="M3 26L25 4"/><use href="#mkx" x="11" y="12" width="6" height="6"/></svg>
        <svg class="i2" width="26" height="30" viewBox="0 0 26 30"><text x="3" y="24" font-family="Liberation Sans" font-size="25" fill="#e8222a">A</text><use href="#mkx" x="17" y="19" width="6" height="6"/></svg>
        <svg class="i3" width="28" height="28" viewBox="0 0 28 28"><text x="0" y="24" font-family="Liberation Sans" font-size="24" fill="#bdc2c7">A</text><path stroke="#bdc2c7" stroke-width="1.500" d="M15 6h12M15 10h12M15 14h12"/></svg>
        <div class="isel"><svg width="30" height="28" viewBox="0 0 30 28"><path fill="#5f8ea3" d="M14 3l14 19H14z"/><path fill="#e8222a" d="M2 3h14v18H2z"/><use href="#mkx" x="7" y="21" width="6" height="6"/></svg></div>
        <svg class="i5" width="28" height="28" viewBox="0 0 28 28"><path fill="none" stroke="#e8222a" stroke-width="1.500" d="M3 24V5h22v17"/><circle cx="3" cy="25" r="2.500" fill="#0b4a63"/><circle cx="25" cy="22" r="2.500" fill="#0b4a63"/><path fill="#f5f7fb" d="M6 1h16v7H6z"/><use href="#mkx" x="11" y="2" width="6" height="6"/></svg>
        <svg class="i6" width="28" height="30" viewBox="0 0 28 30"><rect x="2" y="2" width="24" height="26" fill="#d8dbde" stroke="#c3c7cc"/><path stroke="#b3b8bd" d="M2 12L12 2M2 20L20 2M2 28L26 4M10 28L26 12M18 28l8-8"/></svg>
        <svg class="i7" width="28" height="20" viewBox="0 0 28 20"><path fill="none" stroke="#bdc2c7" d="M1 5l10 10h16"/><text x="10" y="12" font-family="Liberation Sans" font-size="14" fill="#bdc2c7">Te</text></svg>
        <svg class="i8" width="30" height="30" viewBox="0 0 30 30"><path stroke="#bdc2c7" stroke-width="1.500" d="M3 3l10 9"/><circle cx="18" cy="18" r="10" fill="none" stroke="#bdc2c7" stroke-width="1.500"/><text x="18" y="23" text-anchor="middle" font-family="Liberation Sans" font-size="13" fill="#bdc2c7">1</text></svg>
        <svg class="i9" width="28" height="24" viewBox="0 0 28 24"><path fill="none" stroke="#c0c4c9" stroke-width="1.200" d="M1 2h26v20H1zM1 7h26M1 12h26M1 17h26M14 7v15"/></svg>
      </div>
      <div class="list-group lg-g w106">
        <div class="list-group-item">Design Project</div>
        <div class="list-group-item">Parametric tabl…</div>
        <div class="list-group-item">Document Subt…</div>
        <div class="list-group-item">group thin</div>
        <div class="list-group-item">date</div>
        <div class="list-group-item">default</div>
        <div class="list-group-item active">Datum for Plans</div>
        <div class="list-group-item">Parametric co…</div>
        <div class="list-group-item">plain medium</div>
        <div class="list-group-item">Checked by</div>
        <div class="list-group-item">solid medium</div>
        <div class="list-group-item">Format</div>
        <div class="list-group-item">Drawn by</div>
        <div class="list-group-item">plain small</div>
        <div class="list-group-item">Checked date</div>
        <div class="list-group-item">Model Specifica…</div>
        <div class="list-group-item">Sheet Title</div>
        <div class="list-group-item">Parametric tabl…</div>
        <div class="list-group-item">Parametric tabl…</div>
        <div class="list-group-item">Free  (text)</div>
        <div class="list-group-item">Free  (line)</div>
        <div class="list-group-item">view_box</div>
        <div class="list-group-item">construction</div>
        <div class="list-group-item">Scale</div>
        <div class="list-group-item">center line</div>
        <div class="list-group-item active">Datum XZ Elev…</div>
      </div>
      <div class="vsb lsb">
        <div class="b top"><svg class="chev"><use href="#chevu"/></svg></div>
        <div class="b thumb"><span class="grip g3"></span></div>
        <div class="b bot"><svg class="chev"><use href="#chev"/></svg></div>
      </div>
      <div class="list-group lg-g w120">
        <div class="list-group-item">Miscellaneous</div>
        <div class="list-group-item">Drawing numbers…</div>
        <div class="list-group-item">Dimensioning an…</div>
        <div class="list-group-item">General Notes</div>
        <div class="list-group-item">Center Lines</div>
        <div class="list-group-item">Parametrics - inst…</div>
        <div class="list-group-item">Sheet borders an…</div>
        <div class="list-group-item">3D - profillines</div>
        <div class="list-group-item">3D - linklines</div>
        <div class="list-group-item">Construction Lines</div>
        <div class="list-group-item active">3D - view definitions</div>
      </div>
      <div class="list-group lg-g w120">
        <div class="list-group-item">Short Dash Line</div>
        <div class="list-group-item">Solid Line</div>
        <div class="list-group-item">Chain Line</div>
        <div class="list-group-item">Long Dash Line</div>
        <div class="list-group-item">Plain Text</div>
      </div>
      <div class="list-group lg-g w120">
        <div class="list-group-item d-flex align-items-center"><i class="lw"></i>0.18</div>
        <div class="list-group-item d-flex align-items-center"><i class="lw a"></i>0.25</div>
        <div class="list-group-item active d-flex align-items-center"><i class="lw b"></i>0.35</div>
        <div class="list-group-item d-flex align-items-center"><i class="lw c"></i>0.50</div>
        <div class="list-group-item d-flex align-items-center"><i class="lw d"></i>0.70</div>
      </div>
      <div class="colors">
        <svg width="26" height="48" viewBox="0 0 26 48"><rect width="26" height="16" fill="#0000d0"/><rect y="16" width="26" height="16" fill="#06c506"/><rect y="32" width="26" height="16" fill="#000"/><rect x="3" y="3" width="20" height="10" fill="url(#dbl)"/><rect x="3" y="19" width="20" height="10" fill="url(#dgr)"/><rect x="11" y="38" width="4" height="4" fill="#fff"/></svg>
      </div>
    </div>
    <div class="d-flex radios">
      <div class="fcol">
        <div class="d-flex align-items-center rr r1"><span class="radio"></span>Build filter from sheet selection</div>
        <div class="d-flex align-items-center rr"><span class="radio on"></span>Modify filter / Use for selection</div>
      </div>
      <svg class="rs1" width="27" height="27" viewBox="0 0 32 32"><use href="#save"/></svg>
      <svg class="rs2" width="27" height="27" viewBox="0 0 32 32"><use href="#redx"/></svg>
      <svg class="rs3" width="24" height="24" viewBox="0 0 32 32"><use href="#eject"/></svg>
    </div>
    <div class="ftr f-ps">
      <button class="btn qbtn w7">Select All</button><button class="btn qbtn w7">Draw selection only</button><button class="btn qbtn w7">Update</button><button class="btn qbtn w7">Filter Selection</button><button class="btn qbtn w7">Close</button><button class="btn qbtn ms-auto w7">Help</button>
    </div>
  </section>

  <section class="dlg d-vf">
    <div class="dtitle ui"><svg class="lg"><use href="#logo"/></svg>View Frames<svg class="x"><use href="#x"/></svg></div>
    <div class="d-flex justify-content-between vf-h"><span>Frame Border</span><span>Pen</span></div>
    <div class="d-flex align-items-center vf-r"><input class="form-check-input" type="checkbox" checked disabled><span class="flex-grow-1">Main view</span><input class="form-control qinp w24" value="1"></div>
    <div class="d-flex align-items-center vf-r dis"><input class="form-check-input" type="checkbox" disabled><span class="flex-grow-1">View 2</span><input class="form-control qinp ro w24"></div>
    <div class="d-flex align-items-center vf-r dis"><input class="form-check-input" type="checkbox" disabled><span class="flex-grow-1">View 3</span><input class="form-control qinp ro w24"></div>
    <div class="d-flex align-items-center vf-r dis"><input class="form-check-input" type="checkbox" disabled><span class="flex-grow-1">View 4</span><input class="form-control qinp ro w24"></div>
    <div class="d-flex align-items-center vf-r dis"><input class="form-check-input" type="checkbox" disabled><span class="flex-grow-1">View 5</span><input class="form-control qinp ro w24"></div>
    <div class="ftr f-vf">
      <button class="btn qbtn">Apply</button><button class="btn qbtn">Cancel</button><button class="btn qbtn ms-auto">Help</button>
    </div>
  </section>

  <section class="dlg d-sv">
    <div class="dtitle ui"><svg class="lg"><use href="#logo"/></svg>Scaled Views<svg class="x"><use href="#x"/></svg></div>
    <div class="d-flex align-items-center sv-tb">
      <svg width="26" height="26" viewBox="0 0 32 32"><use href="#save"/></svg>
      <svg width="26" height="26" viewBox="0 0 32 32"><use href="#redx"/></svg>
      <svg width="26" height="26" viewBox="0 0 26 26"><path fill="#27637b" d="M2 24l2-9L16 3l6 6-12 12zM18 2l2-1 5 5-1 2z"/></svg>
      <svg width="26" height="26" viewBox="0 0 26 26"><rect x="1" y="1" width="24" height="24" fill="#fff" stroke="#9aa0a6" stroke-width="2"/><circle cx="13" cy="11" r="7" fill="none" stroke="#27637b" stroke-width="1.500"/><rect x="9" y="8" width="8" height="6" fill="none" stroke="#e8222a"/><path stroke="#27637b" stroke-width="2.500" d="M8 16l-5 6"/><path fill="#9aa0a6" d="M16 19h9v6h-9z"/></svg>
      <svg width="26" height="26" viewBox="0 0 26 26"><rect x="1" y="1" width="24" height="24" fill="#fff" stroke="#0b4a63" stroke-width="2"/><svg x="5" y="3" width="16" height="18" viewBox="0 0 24 24"><use href="#refresh"/></svg><path fill="#0b4a63" d="M16 19h9v6h-9z"/><path fill="#fff" d="M18 21h5v2h-5z"/></svg>
      <svg width="26" height="26" viewBox="0 0 26 26"><path fill="none" stroke="#0b4a63" stroke-width="2" d="M2 24V5h20v19z"/><circle cx="23" cy="3" r="2.200" fill="#fff" stroke="#e8222a"/><use href="#mkx" x="0" y="20" width="6" height="6"/></svg>
      <svg width="26" height="26" viewBox="0 0 26 26"><rect x="1" y="1" width="24" height="24" fill="#fff" stroke="#0b4a63" stroke-width="2"/><rect x="5" y="4" width="13" height="13" fill="none" stroke="#e8222a" stroke-width="2"/><path fill="#0b4a63" d="M16 19h9v6h-9z"/><path fill="#fff" d="M18 21h5v2h-5z"/></svg>
    </div>
    <div class="sv-av">Available Scaled Views:</div>
    <div class="d-flex align-items-center sv-c">
      <div class="combo c-sv"><div class="v"></div><div class="a"><svg class="chev"><use href="#chev"/></svg></div></div>
      <input class="form-check-input sv-cb" type="checkbox" disabled><span class="dis sv-u">Use as temporary scale</span>
    </div>
    <fieldset class="position-relative sv-f">
      <legend class="position-absolute">Current Scaled View</legend>
      <div class="d-flex align-items-center sv-r"><span class="flex-grow-1">Name</span><input class="form-control qinp w139" value="Softpedia"></div>
      <div class="d-flex align-items-center sv-r"><span class="flex-grow-1">Scale</span><input class="form-control qinp w139" value="1:43"></div>
      <div class="d-flex align-items-center sv-r"><span class="flex-grow-1">Coordinate left below</span><input class="form-control qinp w139" value="15"></div>
      <div class="d-flex align-items-center sv-r"><span class="flex-grow-1">Coordinate right top</span><input class="form-control qinp w139" value="20"></div>
    </fieldset>
    <div class="ftr f-sv">
      <button class="btn qbtn w8">Close</button><button class="btn qbtn ms-auto">Help</button>
    </div>
  </section>
</div>
</body>
</html>
